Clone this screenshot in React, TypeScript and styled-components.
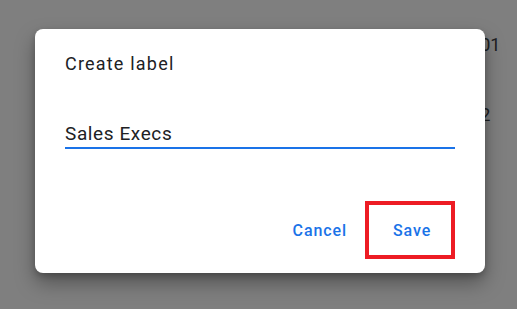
import { FC } from 'react'
import styled, { createGlobalStyle } from 'styled-components'

const GlobalStyle = createGlobalStyle`
  html, body {
    margin: 0;
    padding: 0;
    background: #ffffff;
    font-family: Roboto, 'Liberation Sans', sans-serif;
  }
`

const Page = styled.div`
  width: 517px;
  height: 309px;
  overflow: hidden;
  position: relative;
  display: flex;
  justify-content: flex-end;
`

const DateColumn = styled.div`
  width: 57px;
  padding-top: 35px;
  display: flex;
  flex-direction: column;
  gap: 50px;
`

const DateText = styled.span`
  font-size: 18px;
  line-height: 20px;
  color: #3c4043;
`

const Scrim = styled.div`
  position: absolute;
  inset: 0;
  background: rgba(0, 0, 0, 0.5);
  display: flex;
  align-items: flex-start;
  padding: 29px 0 0 35px;
`

const Dialog = styled.div`
  width: 450px;
  height: 244px;
  box-sizing: border-box;
  background: #ffffff;
  border-radius: 8px;
  padding: 23px 30px 14px;
  display: flex;
  flex-direction: column;
  box-shadow: 0 10px 20px rgba(0, 0, 0, 0.34), 0 3px 6px rgba(0, 0, 0, 0.2);
`

const Title = styled.h2`
  margin: 0;
  font-size: 18px;
  line-height: 24px;
  font-weight: 400;
  letter-spacing: 1.2px;
  color: #202124;
`

const Input = styled.input`
  margin-top: 45px;
  border: none;
  border-bottom: 2px solid #1a73e8;
  outline: none;
  padding: 0 0 2px;
  height: 28px;
  box-sizing: border-box;
  font-family: inherit;
  font-size: 19px;
  line-height: 24px;
  letter-spacing: 0.6px;
  color: #202124;
  background: transparent;
`

const Actions = styled.div`
  margin-top: auto;
  display: flex;
  justify-content: flex-end;
  align-items: center;
  gap: 10px;
`

const TextButton = styled.button<{ $highlighted?: boolean }>`
  font-family: inherit;
  font-size: 16px;
  font-weight: 500;
  letter-spacing: 0.9px;
  color: #1a73e8;
  background: transparent;
  cursor: pointer;
  height: ${({ $highlighted }) => ($highlighted ? '58px' : '36px')};
  width: ${({ $highlighted }) => ($highlighted ? '90px' : 'auto')};
  box-sizing: border-box;
  border: ${({ $highlighted }) => ($highlighted ? '4px solid #ed1c24' : 'none')};
  padding: ${({ $highlighted }) => ($highlighted ? '0 18px 0 24px' : '0 8px')};
  text-align: left;
`

const App: FC = () => {
  return (
    <>
      <GlobalStyle />
      <Page>
        <DateColumn>
          <DateText>2001</DateText>
          <DateText>202</DateText>
        </DateColumn>
        <Scrim>
          <Dialog>
            <Title>Create label</Title>
            <Input type='text' defaultValue='Sales Execs' />
            <Actions>
              <TextButton>Cancel</TextButton>
              <TextButton $highlighted>Save</TextButton>
            </Actions>
          </Dialog>
        </Scrim>
      </Page>
    </>
  )
}

export default App
